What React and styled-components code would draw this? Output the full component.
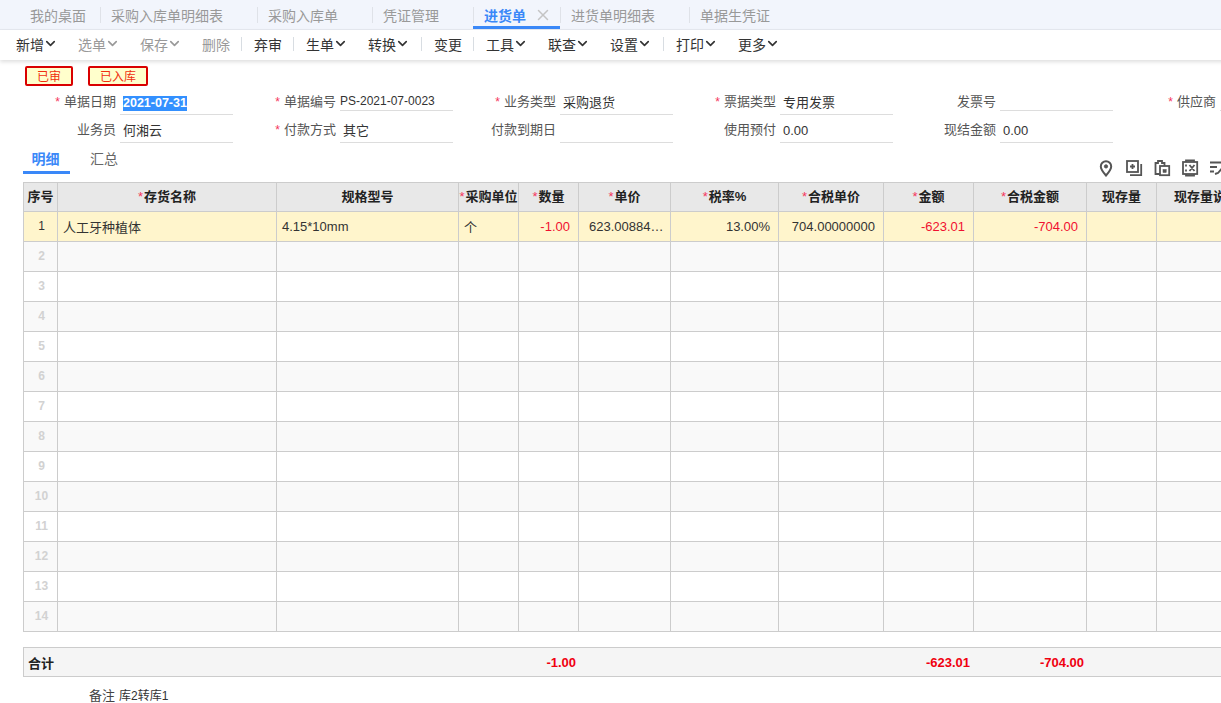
import React from "react";
import styled, { createGlobalStyle } from "styled-components";
import { ChevronDown, X } from "lucide-react";

const Global = createGlobalStyle`
  html, body { margin: 0; padding: 0; width: 1221px; height: 703px; overflow: hidden; background: #fff; }
  body { font-family: "Liberation Sans", "Noto Sans CJK SC", sans-serif; color: #333; }
  * { box-sizing: border-box; }
`;
const Page = styled.div`width: 1270px; height: 703px; overflow: hidden;`;

const TabBar = styled.div`display: flex; height: 30px; padding-left: 19px; background: #f2f5fc; border-bottom: 1px solid #e6e9f0;`;
const Tab = styled.div`
  position: relative; display: flex; align-items: center; height: 29px; font-size: 14px; white-space: nowrap;
  padding-left: 11px; padding-right: ${p => p.$first ? 14 : p.$active ? 0 : 34}px;
  color: ${p => p.$active ? "#3a88f8" : "#999"}; font-weight: ${p => p.$active ? 700 : 400};
  ${p => p.$active && "box-shadow: inset 0 -3px 0 #3a88f8;"}
  &::before { content: ""; position: absolute; left: 0; top: 7px; height: 16px; width: 1px; background: ${p => p.$first ? "transparent" : "#dfe2e8"}; }
`;
const Close = styled.span`display: flex; width: 34px; justify-content: center; color: #c4c4c4;`;

const Toolbar = styled.div`position: relative; display: flex; align-items: center; height: 30px; padding: 0 0 2px 5px; background: #fff; box-shadow: 0 2px 4px rgba(0,0,0,.13);`;
const ToolItem = styled.div`display: flex; align-items: center; padding: 0 11px; font-size: 14px; white-space: nowrap; color: ${p => p.$off ? "#999" : "#333"}; svg { width: 15px; height: 15px; margin: -1px -1.5px 0; }`;
const ToolSep = styled.span`width: 1px; height: 14px; margin-right: 1px; margin-left: ${p => p.$wide ? 2 : 0}px; background: #d8dde2;`;

const Tags = styled.div`display: flex; gap: 15px; padding: 6px 0 0 25px; height: 32px;`;
const Tag = styled.div`display: flex; align-items: center; justify-content: center; width: ${p => p.$w}px; height: 20px; padding-bottom: 1px; border: 2px solid #d90000; border-radius: 2px; background: #ffffcc; color: #f03010; font-size: 12px;`;

const Form = styled.div`display: grid; grid-template-columns: repeat(6, 220px); grid-auto-rows: 28px; padding-left: 20px; height: 51px; margin-top: -5px;`;
const Field = styled.div`display: flex; height: 28px; align-items: flex-start;`;
const Label = styled.label`display: block; width: 96px; padding-top: 6px; text-align: right; font-size: 13px; line-height: 18px; color: #555; white-space: nowrap;`;
const Star = styled.span`color: #f5365c; margin-right: 4px; font-size: 12px;`;
const Value = styled.div`
  width: 113px; margin-left: 4px; height: ${p => p.$short ? 24 : 28}px; border-bottom: 1px solid #ddd;
  padding: ${p => p.$short ? "5px 0 0 0" : "7px 0 0 3px"}; font-size: ${p => p.$short ? 12 : 13}px; line-height: 18px; color: #333; white-space: nowrap;
`;
const Selected = styled.span`background: #3390ff; color: #fff; font-size: 12.5px; display: inline-block; line-height: 15px; font-weight: 700;`;

const DetailBar = styled.div`display: flex; align-items: flex-start; height: 35px; margin-top: 9px; padding: 0 43px 0 23px;`;
const DetailTab = styled.div`
  display: flex; justify-content: center; align-items: center; width: ${p => p.$w}px; height: 27px; font-size: 14px; padding: 0 2px 6px 0;
  color: ${p => p.$active ? "#3a88f8" : "#666"}; font-weight: ${p => p.$active ? 700 : 400};
  ${p => p.$active && "box-shadow: inset 0 -3px 0 #3a88f8;"}
`;
const IconRow = styled.div`display: flex; gap: 10px; margin-left: auto; padding-top: 12px; color: #555; svg { width: 18px; height: 18px; display: block; }`;

const Sheet = styled.table`
  border-collapse: separate; border-spacing: 0; table-layout: fixed; width: 1134px; margin: ${p => p.$m || "0"} 0 0 23px;
  border-top: 1px solid #ccc; border-left: 1px solid #ccc; font-size: 13px;
  ${p => p.$sum && "background: #f5f5f5;"}
`;
const Head = styled.th`
  height: 29px; padding: 0 0 3px; background: #e8e8e8; border-right: 1px solid #ccc; border-bottom: 1px solid #ccc;
  font-size: 13px; font-weight: 700; color: #222; white-space: nowrap;
`;
const ReqStar = styled.span`color: #f5365c; font-weight: 400; margin-right: 1px;`;
const Cell = styled.td`
  height: 30px; padding: ${p => p.$right ? "0 8px 1px 2px" : "0 3px 1px 5px"}; border-right: 1px solid #ccc; border-bottom: 1px solid #ccc;
  text-align: ${p => p.$right ? "right" : p.$center ? "center" : "left"};
  background: ${p => p.$hl ? "#fff5cc" : p.$alt ? "#f9f9f9" : "#fff"};
  color: ${p => p.$neg ? "#f01030" : p.$idle ? "#d2d2d2" : "#333"};
  font-size: ${p => p.$center ? 12 : 13}px; font-weight: ${p => p.$idle ? 700 : 400};
  white-space: nowrap; overflow: hidden; text-overflow: ${p => p.$clip ? "ellipsis" : "clip"};
  ${p => p.$clip && "padding-left: 10px;"}
`;
const SumCell = styled.td`
  height: 29px; padding: ${p => p.$right ? `0 ${p.$right}px 0 0` : "0 0 0 4px"}; border-bottom: 1px solid #ccc;
  text-align: ${p => p.$right ? "right" : "left"}; font-size: 13px; font-weight: 700; color: ${p => p.$right ? "#f00010" : "#222"};
`;
const Note = styled.div`display: flex; align-items: center; gap: 4px; height: 26px; margin-top: 4px; padding-left: 89px; font-size: 13px; color: #444;`;
const NoteText = styled.span`font-size: 12px; color: #333;`;

const widths = [34, 219, 182, 60, 60, 92, 108, 105, 90, 113, 70, 100];
const Cols = () => <colgroup>{widths.map((w, i) => <col key={i} style={{ width: w }} />)}</colgroup>;

const tabs = ["我的桌面", "采购入库单明细表", "采购入库单", "凭证管理", "进货单", "进货单明细表", "单据生凭证"];
const heads = [["序号"], ["存货名称", 1], ["规格型号"], ["采购单位", 1], ["数量", 1], ["单价", 1], ["税率%", 1], ["合税单价", 1], ["金额", 1], ["合税金额", 1], ["现存量"], ["现存量说明"]];

const Field1 = ({ star, label, value, short, sel }) => (
  <Field>
    <Label>{star && <Star>*</Star>}{label}</Label>
    <Value $short={short}>{sel ? <Selected>{value}</Selected> : value}</Value>
  </Field>
);

const Tool = ({ label, off, chev = true }) => <ToolItem $off={off}>{label}{chev && <ChevronDown strokeWidth={2.6} />}</ToolItem>;

export default function App() {
  return (
    <Page>
      <Global />
      <TabBar>
        {tabs.map((t, i) => (
          <Tab key={t} $first={i === 0} $active={i === 4}>
            {t}
            {i === 4 && <Close><X size={18} strokeWidth={2} /></Close>}
          </Tab>
        ))}
      </TabBar>
      <Toolbar>
        <Tool label="新增" /><Tool label="选单" off /><Tool label="保存" off /><Tool label="删除" off chev={false} />
        <ToolSep /><Tool label="弃审" chev={false} /><ToolSep />
        <Tool label="生单" /><Tool label="转换" /><ToolSep $wide />
        <Tool label="变更" chev={false} /><ToolSep />
        <Tool label="工具" /><Tool label="联查" /><Tool label="设置" /><ToolSep $wide />
        <Tool label="打印" /><Tool label="更多" />
      </Toolbar>
      <Tags><Tag $w={48}>已审</Tag><Tag $w={60}>已入库</Tag></Tags>
      <Form>
        <Field1 star label="单据日期" value="2021-07-31" sel />
        <Field1 star label="单据编号" value="PS-2021-07-0023" short />
        <Field1 star label="业务类型" value="采购退货" />
        <Field1 star label="票据类型" value="专用发票" />
        <Field1 label="发票号" value="" short />
        <Field1 star label="供应商" value="" short />
        <Field1 label="业务员" value="何湘云" />
        <Field1 star label="付款方式" value="其它" />
        <Field1 label="付款到期日" value="" />
        <Field1 label="使用预付" value="0.00" />
        <Field1 label="现结金额" value="0.00" />
      </Form>
      <DetailBar>
        <DetailTab $w={47} $active>明细</DetailTab>
        <DetailTab $w={70}>汇总</DetailTab>
        <IconRow>
          <svg viewBox="0 0 18 18" fill="none" stroke="currentColor" strokeWidth="2"><path d="M9 16.5C6 13 3.8 10.3 3.8 7.4a5.2 5.2 0 0 1 10.4 0c0 2.9-2.2 5.6-5.2 9.1z" /><circle cx="9" cy="7.4" r="1.6" fill="currentColor" strokeWidth="1" /></svg>
          <svg viewBox="0 0 18 18" fill="none" stroke="currentColor" strokeWidth="1.8"><rect x="2" y="2" width="11" height="11" /><path d="M5 16.2h11.2V5M5 7.5h5M7.5 5v5" /></svg>
          <svg viewBox="0 0 18 18" fill="none" stroke="currentColor" strokeWidth="1.8"><path d="M7 15H2.5V4H5V2h4v2h2.5v3" /><rect x="7" y="7" width="9.2" height="9.2" /><rect x="10" y="10.5" width="3.2" height="3" fill="currentColor" strokeWidth="0.5" /></svg>
          <svg viewBox="0 0 18 18" fill="none" stroke="currentColor" strokeWidth="1.8"><path d="M5 3V1.5h8V3M5 15v1.5h8V15" /><rect x="2" y="3" width="14.2" height="12" /><path d="M8.5 6l5 6M13.5 6l-5 6M5 5.5v2M5 10.5v2" /></svg>
          <svg viewBox="0 0 18 18" fill="none" stroke="currentColor" strokeWidth="1.9"><path d="M1 3.5h15M1 8h7M1 12.5h4M15 7l-6 7-3 1" /></svg>
        </IconRow>
      </DetailBar>
      <Sheet>
        <Cols />
        <thead>
          <tr>{heads.map(([h, r]) => <Head key={h}>{r && <ReqStar>*</ReqStar>}{h}</Head>)}</tr>
        </thead>
        <tbody>
          <tr>
            <Cell $hl $center>1</Cell>
            <Cell $hl>人工牙种植体</Cell>
            <Cell $hl>4.15*10mm</Cell>
            <Cell $hl>个</Cell>
            <Cell $hl $right $neg>-1.00</Cell>
            <Cell $hl $clip>623.00884513</Cell>
            <Cell $hl $right>13.00%</Cell>
            <Cell $hl $right>704.00000000</Cell>
            <Cell $hl $right $neg>-623.01</Cell>
            <Cell $hl $right $neg>-704.00</Cell>
            <Cell $hl />
            <Cell $hl />
          </tr>
          {Array.from({ length: 13 }, (_, i) => (
            <tr key={i}>
              <Cell $center $idle $alt={i % 2 === 0}>{i + 2}</Cell>
              {widths.slice(1).map((_, j) => <Cell key={j} $alt={i % 2 === 0} />)}
            </tr>
          ))}
        </tbody>
      </Sheet>
      <Sheet $sum $m="15px">
        <Cols />
        <tbody>
          <tr>
            <SumCell colSpan={4}>合计</SumCell>
            <SumCell $right={3}>-1.00</SumCell>
            <SumCell colSpan={3} />
            <SumCell $right={4}>-623.01</SumCell>
            <SumCell $right={3}>-704.00</SumCell>
            <SumCell colSpan={2} />
          </tr>
        </tbody>
      </Sheet>
      <Note>备注<NoteText>库2转库1</NoteText></Note>
    </Page>
  );
}
